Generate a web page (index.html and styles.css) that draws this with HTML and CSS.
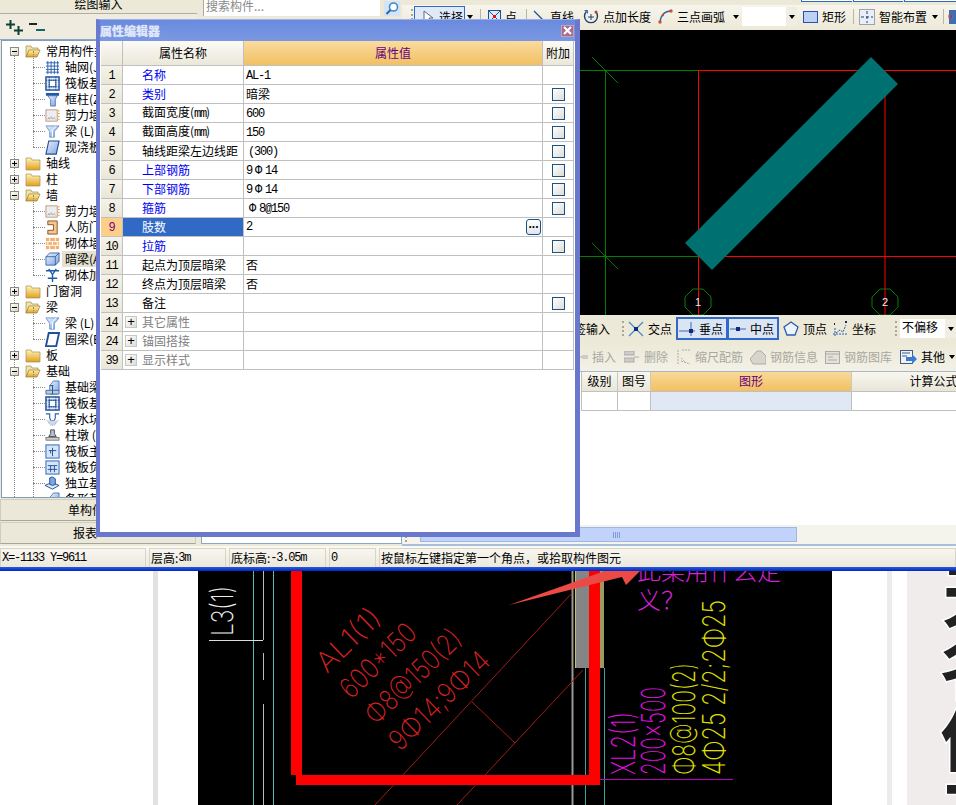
FILE: index.html
```html
<!DOCTYPE html>
<html lang="zh">
<head>
<meta charset="utf-8">
<title>属性编辑器</title>
<link rel="stylesheet" href="styles.css">
</head>
<body>
<svg class="defs" width="0" height="0">
  <defs>
    <linearGradient id="gf" x1="0" y1="0" x2="0" y2="1"><stop offset="0" stop-color="#fff3b8"/><stop offset="1" stop-color="#e0a020"/></linearGradient>
    <linearGradient id="gb" x1="0" y1="0" x2="1" y2="1"><stop offset="0" stop-color="#e8f0fc"/><stop offset="1" stop-color="#7fa6e0"/></linearGradient>
    <symbol id="f-open" viewBox="0 0 16 16"><path d="M1 3h5l1 2h6v3H4L1 14z" fill="#f3e3a0" stroke="#a08a50" stroke-width=".7"/><path d="M4 7h11l-3 7H1z" fill="url(#gf)" stroke="#9a7d30" stroke-width=".7"/></symbol>
    <symbol id="f-closed" viewBox="0 0 16 16"><path d="M1 3h5l1 2h8v10H1z" fill="url(#gf)" stroke="#a89050" stroke-width=".7"/></symbol>
    <symbol id="i-grid" viewBox="0 0 16 16"><path d="M3 1v14M6.500 1v14M10 1v14M13.500 1v14M1 3h14M1 6.500h14M1 10h14M1 13h14" stroke="#2a5faf" fill="none" stroke-width="1"/></symbol>
    <symbol id="i-raft" viewBox="0 0 16 16"><rect x="1" y="1" width="14" height="14" fill="#dfe9f8" stroke="#1f4f98" stroke-width="1.500"/><rect x="4.500" y="4.500" width="7" height="7" fill="#fff" stroke="#1f4f98"/><path d="M1 4.500h14M1 11.500h14M4.500 1v14M11.500 1v14" stroke="#1f4f98" stroke-dasharray="1.500 1" fill="none"/></symbol>
    <symbol id="i-col" viewBox="0 0 16 16"><path d="M1 1h14v3H1z" fill="#1f5aa8"/><path d="M3 4h10l-2 4v7H6V8z" fill="url(#gb)" stroke="#1f4f98" stroke-width=".7"/></symbol>
    <symbol id="i-wall" viewBox="0 0 16 16"><rect x="1" y="2" width="12" height="12" fill="#eee" stroke="#b08060" stroke-width=".8"/><path d="M3 12l1-2 1 2 2-3 1 3 2-2 1 2" stroke="#888" fill="none" stroke-dasharray="1 .7"/><path d="M14 3h1.500M14 6h1.500M14 9h1.500M14 12h1.500" stroke="#e08020"/></symbol>
    <symbol id="i-beam" viewBox="0 0 16 16"><path d="M1 2h14L10 8v6H5V8z" fill="url(#gb)" stroke="#3c78b8" stroke-width=".7"/><path d="M6 8l6-6M8 14V7" stroke="#fff"/></symbol>
    <symbol id="i-slab" viewBox="0 0 16 16"><path d="M4 1h11l-3 14H1z" fill="url(#gb)" stroke="#1f4f98" stroke-width="1.200"/></symbol>
    <symbol id="i-door" viewBox="0 0 16 16"><path d="M3 1h10v14H3v-4h6V5H3z" fill="#f3c890" stroke="#8a5020"/></symbol>
    <symbol id="i-brick" viewBox="0 0 16 16"><rect x="1" y="2" width="14" height="12" fill="#f4b070"/><path d="M1 6h14M1 10h14M5 2v4M11 2v4M3 6v4M8 6v4M13 6v4M5 10v4M11 10v4" stroke="#fff" fill="none"/></symbol>
    <symbol id="i-box" viewBox="0 0 16 16"><path d="M1 5l4-4h10v9l-4 4H1z" fill="url(#gb)" stroke="#1f4f98" stroke-width=".8"/><path d="M1 5h10v9M11 5l4-4" stroke="#1f4f98" fill="none" stroke-width=".8"/></symbol>
    <symbol id="i-wadd" viewBox="0 0 16 16"><path d="M1 3h14M4 1l4 6 4-6M8 7v8M3 11h10" stroke="#1f5aa8" fill="none" stroke-width="1.500"/></symbol>
    <symbol id="i-ring" viewBox="0 0 16 16"><path d="M4 1h11l-3 14H1z" fill="#fff" stroke="#1f4f98" stroke-width="2"/></symbol>
    <symbol id="i-fbeam" viewBox="0 0 16 16"><path d="M5 15V6l4-5h6v10l-2 4z" fill="url(#gb)" stroke="#1f4f98" stroke-width=".7"/><path d="M1 15v-4h14v4z" fill="#bcd" stroke="#1f4f98" stroke-width=".8"/><path d="M8 6v9M5 6h4" stroke="#1f4f98"/></symbol>
    <symbol id="i-pit" viewBox="0 0 16 16"><path d="M1 2h4v4l1 3h4l1-3V2h4" fill="none" stroke="#2a5faf" stroke-width="1.200"/><path d="M2 9l4 5h4l4-5" fill="#cfd8e6" stroke="#8aa" stroke-dasharray="1 1"/></symbol>
    <symbol id="i-pier" viewBox="0 0 16 16"><path d="M6 6V2h4v4l2 3H4z" fill="#b8c4d4" stroke="#445"/><rect x="1" y="10" width="14" height="3" fill="#ccc" stroke="#666" stroke-width=".8"/></symbol>
    <symbol id="i-c1" viewBox="0 0 16 16"><rect x="1" y="1" width="14" height="14" fill="#d6e6fa" stroke="#2a5faf"/><path d="M4 7h8M8 4v9M6 7v3" stroke="#1f4f98" fill="none"/></symbol>
    <symbol id="i-c2" viewBox="0 0 16 16"><rect x="1" y="1" width="14" height="14" fill="#d6e6fa" stroke="#2a5faf"/><path d="M3 6h10M3 10h10M6 6v7M10 6v7" stroke="#1f4f98" fill="none"/></symbol>
    <symbol id="i-iso" viewBox="0 0 16 16"><path d="M0 10l7-3 8 3-7 4z" fill="#dfe9f8" stroke="#1f4f98"/><path d="M5 9V2l3-1 3 2v6l-3 1z" fill="#7fa6e0" stroke="#1f4f98"/></symbol>
  </defs>
</svg>

<div class="app">
  <div class="work">
    <aside class="left">
      <div class="top-tab"><span>绘图输入</span></div>
      <div class="mini-tb">
        <svg width="40" height="16" viewBox="0 0 40 16" aria-hidden="true"><path d="M0 4.500h9M4.500 0v9M8 10.500h9M12.500 6v9" stroke="#0f3f3a" stroke-width="2" fill="none"/><path d="M23 4h8" stroke="#222" stroke-width="2"/><path d="M30 10h9" stroke="#0f6a60" stroke-width="2"/></svg>
      </div>
      <div class="tree">
        <div class="tree-in">
          <div class="node"><span class="exp minus"></span><svg class="fd"><use href="#f-open"/></svg><span class="lb">常用构件类型</span></div>
          <div class="kids">
            <div class="leaf"><svg class="ic"><use href="#i-grid"/></svg><span class="lb">轴网(J)</span></div>
            <div class="leaf"><svg class="ic"><use href="#i-raft"/></svg><span class="lb">筏板基础(M)</span></div>
            <div class="leaf"><svg class="ic"><use href="#i-col"/></svg><span class="lb">框柱(Z)</span></div>
            <div class="leaf"><svg class="ic"><use href="#i-wall"/></svg><span class="lb">剪力墙(Q)</span></div>
            <div class="leaf"><svg class="ic"><use href="#i-beam"/></svg><span class="lb">梁 (L)</span></div>
            <div class="leaf"><svg class="ic"><use href="#i-slab"/></svg><span class="lb">现浇板(B)</span></div>
          </div>
          <div class="node"><span class="exp plus"></span><svg class="fd"><use href="#f-closed"/></svg><span class="lb">轴线</span></div>
          <div class="node"><span class="exp plus"></span><svg class="fd"><use href="#f-closed"/></svg><span class="lb">柱</span></div>
          <div class="node"><span class="exp minus"></span><svg class="fd"><use href="#f-open"/></svg><span class="lb">墙</span></div>
          <div class="kids">
            <div class="leaf"><svg class="ic"><use href="#i-wall"/></svg><span class="lb">剪力墙(Q)</span></div>
            <div class="leaf"><svg class="ic"><use href="#i-door"/></svg><span class="lb">人防门框墙</span></div>
            <div class="leaf"><svg class="ic"><use href="#i-brick"/></svg><span class="lb">砌体墙(Q)</span></div>
            <div class="leaf"><svg class="ic"><use href="#i-box"/></svg><span class="lb sel">暗梁(A)</span></div>
            <div class="leaf"><svg class="ic"><use href="#i-wadd"/></svg><span class="lb">砌体加筋</span></div>
          </div>
          <div class="node"><span class="exp plus"></span><svg class="fd"><use href="#f-closed"/></svg><span class="lb">门窗洞</span></div>
          <div class="node"><span class="exp minus"></span><svg class="fd"><use href="#f-open"/></svg><span class="lb">梁</span></div>
          <div class="kids">
            <div class="leaf"><svg class="ic"><use href="#i-beam"/></svg><span class="lb">梁 (L)</span></div>
            <div class="leaf"><svg class="ic"><use href="#i-ring"/></svg><span class="lb">圈梁(E)</span></div>
          </div>
          <div class="node"><span class="exp plus"></span><svg class="fd"><use href="#f-closed"/></svg><span class="lb">板</span></div>
          <div class="node"><span class="exp minus"></span><svg class="fd"><use href="#f-open"/></svg><span class="lb">基础</span></div>
          <div class="kids">
            <div class="leaf"><svg class="ic"><use href="#i-fbeam"/></svg><span class="lb">基础梁(F)</span></div>
            <div class="leaf"><svg class="ic"><use href="#i-raft"/></svg><span class="lb">筏板基础</span></div>
            <div class="leaf"><svg class="ic"><use href="#i-pit"/></svg><span class="lb">集水坑(K)</span></div>
            <div class="leaf"><svg class="ic"><use href="#i-pier"/></svg><span class="lb">柱墩 (Y)</span></div>
            <div class="leaf"><svg class="ic"><use href="#i-c1"/></svg><span class="lb">筏板主筋</span></div>
            <div class="leaf"><svg class="ic"><use href="#i-c2"/></svg><span class="lb">筏板负筋</span></div>
            <div class="leaf"><svg class="ic"><use href="#i-iso"/></svg><span class="lb">独立基础</span></div>
            <div class="leaf"><svg class="ic"><use href="#i-fbeam"/></svg><span class="lb">条形基础</span></div>
          </div>
        </div>
      </div>
      <button class="side-btn">单构件输入</button>
      <button class="side-btn last">报表</button>
    </aside>

    <div class="mid">
      <div class="search-row">
        <div class="search">搜索构件...</div>
        <svg class="mag" width="16" height="16" viewBox="0 0 16 16" aria-hidden="true"><rect x="0" y="0" width="16" height="15" fill="#d5e4f5"/><circle cx="9.500" cy="6" r="4" fill="#fff" stroke="#3c8ac8" stroke-width="1.600"/><path d="M6.500 9L2.500 13" stroke="#2a6aa8" stroke-width="2.200"/></svg>
      </div>
      <div class="listbox"></div>
    </div>

    <div class="right">
      <div class="strip"><span class="tabmark"></span><span class="tabmark"></span><span class="tabmark"></span></div>
      <div class="tb">
        <span class="grip"></span>
        <span class="t-btn"><svg width="14" height="14" viewBox="0 0 14 14"><path d="M3 1v11l3-3 2 4 2-1-2-4h4z" fill="#fff" stroke="#667"/></svg>选择</span>
        <span class="caret"></span>
        <span class="vsep"></span>
        <span class="ti"><svg width="13" height="13" viewBox="0 0 13 13"><rect x=".5" y=".5" width="12" height="12" fill="#dfe8f8" stroke="#1f4f98"/><path d="M1 1l11 11M12 1L1 12" stroke="#1f4f98"/><rect x="5" y="5" width="3" height="3" fill="#e01010"/></svg>点</span>
        <span class="vsep"></span>
        <span class="ti"><svg width="13" height="13" viewBox="0 0 13 13"><path d="M1 1l11 11" stroke="#1f4f98" stroke-width="1.200"/></svg>直线</span>
        <span class="ti"><svg width="16" height="16" viewBox="0 0 16 16"><path d="M3 3a6.500 6.500 0 1 0 10 0" stroke="#1f3f70" stroke-width="1.400" fill="none"/><path d="M5 8h6M8 5v6" stroke="#1f3f70"/><path d="M1 1h4v4z" fill="#3f6fb0"/><circle cx="13" cy="3" r="1.500" fill="#c04030"/></svg>点加长度</span>
        <span class="ti"><svg width="15" height="15" viewBox="0 0 15 15"><path d="M2 13C3 6 7 2 13 2" stroke="#2a6aa8" stroke-width="1.500" fill="none"/><circle cx="2" cy="13" r="1.700" fill="#d05030"/><circle cx="13" cy="2" r="1.700" fill="#d05030"/><circle cx="5" cy="6" r="1.200" fill="#d05030"/></svg>三点画弧</span>
        <span class="caret"></span>
        <span class="combo"><span class="c-arrow"><span class="caret"></span></span></span>
        <span class="ti"><svg width="15" height="12" viewBox="0 0 15 12"><rect x=".5" y=".5" width="14" height="11" fill="#bcd2f5" stroke="#2a4fb0"/></svg>矩形</span>
        <span class="vsep"></span>
        <span class="ti"><svg width="16" height="16" viewBox="0 0 16 16"><rect x=".5" y=".5" width="15" height="15" fill="#e8eff8" stroke="#556" stroke-dasharray="1 1"/><path d="M8 2v12M2 8h12" stroke="#1f3f70" stroke-dasharray="3 2"/></svg>智能布置</span>
        <span class="caret"></span>
        <span class="vsep"></span>
        <svg width="10" height="16" viewBox="0 0 10 16"><rect x="1" y="1" width="9" height="14" fill="#3f6fb0"/><text x="0" y="10" class="tiny-red">0</text></svg>
      </div>

      <svg class="canvas" viewBox="402 30 554 285" aria-hidden="true">
        <rect x="402" y="30" width="554" height="285" fill="#000"/>
        <g stroke="#008000" fill="none">
          <path d="M500 70.500H698M500 256.500H698M605.500 70V315"/>
          <path d="M592 57l26 26M592 243l26 26"/>
          <polygon points="693,289 703,289 711,297 711,307 703,315 693,315 685,307 685,297"/>
          <polygon points="880,289 890,289 898,297 898,307 890,315 880,315 872,307 872,297"/>
        </g>
        <g stroke="#f00" fill="none">
          <path d="M698 70.500H956M698 256.500H956M698.500 70V315M885 70V315"/>
        </g>
        <polygon points="871,57 898,84 712,270 685,243" fill="#007070"/>
        <text x="698" y="306" class="axis">1</text>
        <text x="885" y="306" class="axis">2</text>
      </svg>

      <div class="snapbar">
        <span class="sn-t">标签输入</span>
        <span class="grip"></span>
        <span class="ti"><svg width="16" height="16" viewBox="0 0 16 16"><path d="M1 1l14 14M15 1L1 15" stroke="#3c8ac8" stroke-width="1.200"/><rect x="6" y="6" width="4" height="4" fill="#102a80"/></svg>交点</span>
        <span class="sn-on"><svg width="16" height="14" viewBox="0 0 16 14"><path d="M0 9h16" stroke="#3c6aa8"/><path d="M12 0v14" stroke="#3c6aa8"/><rect x="10" y="7" width="4" height="4" fill="#102a80"/></svg>垂点</span>
        <span class="sn-on"><svg width="16" height="14" viewBox="0 0 16 14"><path d="M0 7h16" stroke="#3c6aa8"/><rect x="6" y="5" width="4" height="4" fill="#102a80"/></svg>中点</span>
        <span class="ti vt"><svg width="16" height="16" viewBox="0 0 16 16"><path d="M8 1l7 5-3 8H4L1 6z" fill="#eef4fb" stroke="#2a5faf" stroke-width="1.300"/></svg>顶点</span>
        <span class="ti"><svg width="16" height="16" viewBox="0 0 16 16"><path d="M3 15V6M1 13h15M4 12l4-3 3 2 3-7" stroke="#2a5faf" stroke-dasharray="2 1" fill="none"/><path d="M2 3h1M13 1h2" stroke="#224" stroke-width="2"/></svg>坐标</span>
        <span class="grip"></span>
        <span class="combo off"><span class="c-txt">不偏移</span><span class="c-arrow"><span class="caret"></span></span></span>
      </div>

      <div class="rebarbar">
        <span class="ti dim"><svg width="10" height="10" viewBox="0 0 10 10"><path d="M0 5h4" stroke="#aaa"/><rect x="4" y="3" width="6" height="4" fill="#ccc"/></svg>插入</span>
        <span class="ti dim"><svg width="16" height="12" viewBox="0 0 16 12"><rect x="0" y="0" width="10" height="4" fill="#ccc" stroke="#aaa"/><rect x="0" y="7" width="10" height="4" fill="#ccc" stroke="#aaa"/><path d="M10 6h5" stroke="#aaa"/></svg>删除</span>
        <span class="ti dim"><svg width="14" height="16" viewBox="0 0 14 16"><path d="M1 1v14M5 1h8M4 12l9 3M4 9l5 5" stroke="#aaa" stroke-dasharray="2 1" fill="none"/></svg>缩尺配筋</span>
        <span class="ti dim"><svg width="16" height="15" viewBox="0 0 16 15"><path d="M0 9l7-8h4l5 5v8H3z" fill="#d8d6cc" stroke="#aaa"/></svg>钢筋信息</span>
        <span class="ti dim"><svg width="15" height="13" viewBox="0 0 15 13"><rect x=".5" y=".5" width="14" height="12" fill="#e4e2d8" stroke="#aaa"/><path d="M1 3h13M3 6h5M3 9h9" stroke="#aaa"/></svg>钢筋图库</span>
        <span class="ti"><svg width="17" height="15" viewBox="0 0 17 15"><rect x=".5" y=".5" width="12" height="13" fill="#eef3fb" stroke="#3f5a80"/><path d="M2 3h8M2 6h5" stroke="#3f5a80"/><path d="M6 7h6V4l5 5-5 5v-3H6z" fill="#3a7ad0"/></svg>其他<span class="caret"></span></span>
      </div>

      <div class="rgrid head">
        <div class="rg-c">级别</div><div class="rg-c">图号</div><div class="rg-c hot">图形</div><div class="rg-c">计算公式</div>
      </div>
      <div class="rgrid row">
        <div class="rg-d"></div><div class="rg-d"></div><div class="rg-d cur"></div><div class="rg-d"></div>
      </div>
      <div class="rfill"></div>
      <div class="scroller">
        <span class="grip"></span>
        <span class="thumb"><span class="thumb-grip"></span></span>
      </div>
    </div>
  </div>

  <div class="status">
    <span class="st s1"><span class="mono">X=-1133 Y=9611</span></span>
    <span class="st s2">层高:<span class="mono">3m</span></span>
    <span class="st s3">底标高:<span class="mono">-3.05m</span></span>
    <span class="st s4"><span class="mono">0</span></span>
    <span class="st s5">按鼠标左键指定第一个角点，或拾取构件图元</span>
  </div>
  <div class="bluebar"></div>

  <section class="dialog">
    <header class="d-title"><span>属性编辑器</span><span class="close"><svg width="9" height="9" viewBox="0 0 9 9"><path d="M1 1l7 7M8 1L1 8" stroke="#fff" stroke-width="2.200"/></svg></span></header>
    <div class="d-body">
      <table class="pt">
        <colgroup><col class="c0"><col class="c1"><col class="c2"><col class="c3"></colgroup>
        <thead>
          <tr><th class="th"></th><th class="th">属性名称</th><th class="th hot">属性值</th><th class="th">附加</th></tr>
        </thead>
        <tbody>
          <tr><td class="n"><span class="mono">1</span></td><td class="k blue">名称</td><td class="v"><span class="mono">AL-1</span></td><td class="x"></td></tr>
          <tr><td class="n"><span class="mono">2</span></td><td class="k blue">类别</td><td class="v">暗梁</td><td class="x"><span class="cb"></span></td></tr>
          <tr><td class="n"><span class="mono">3</span></td><td class="k">截面宽度(<span class="mono">mm</span>)</td><td class="v"><span class="mono">600</span></td><td class="x"><span class="cb"></span></td></tr>
          <tr><td class="n"><span class="mono">4</span></td><td class="k">截面高度(<span class="mono">mm</span>)</td><td class="v"><span class="mono">150</span></td><td class="x"><span class="cb"></span></td></tr>
          <tr><td class="n"><span class="mono">5</span></td><td class="k">轴线距梁左边线距</td><td class="v ind"><span class="mono">(300)</span></td><td class="x"><span class="cb"></span></td></tr>
          <tr><td class="n"><span class="mono">6</span></td><td class="k blue">上部钢筋</td><td class="v"><span class="mono">9<span class="phi">Φ</span>14</span></td><td class="x"><span class="cb"></span></td></tr>
          <tr><td class="n"><span class="mono">7</span></td><td class="k blue">下部钢筋</td><td class="v"><span class="mono">9<span class="phi">Φ</span>14</span></td><td class="x"><span class="cb"></span></td></tr>
          <tr><td class="n"><span class="mono">8</span></td><td class="k blue">箍筋</td><td class="v"><span class="mono"><span class="phi">Φ</span>8@150</span></td><td class="x"><span class="cb"></span></td></tr>
          <tr class="cur"><td class="n"><span class="mono">9</span></td><td class="k">肢数</td><td class="v"><div class="v-flex"><span class="mono">2</span><span class="more">...</span></div></td><td class="x"></td></tr>
          <tr><td class="n"><span class="mono">10</span></td><td class="k blue">拉筋</td><td class="v"></td><td class="x"><span class="cb"></span></td></tr>
          <tr><td class="n"><span class="mono">11</span></td><td class="k">起点为顶层暗梁</td><td class="v">否</td><td class="x"></td></tr>
          <tr><td class="n"><span class="mono">12</span></td><td class="k">终点为顶层暗梁</td><td class="v">否</td><td class="x"></td></tr>
          <tr><td class="n"><span class="mono">13</span></td><td class="k">备注</td><td class="v"></td><td class="x"><span class="cb"></span></td></tr>
          <tr class="grp"><td class="n"><span class="mono">14</span></td><td class="k"><span class="pl">+</span>其它属性</td><td class="v"></td><td class="x"></td></tr>
          <tr class="grp"><td class="n"><span class="mono">24</span></td><td class="k"><span class="pl">+</span>锚固搭接</td><td class="v"></td><td class="x"></td></tr>
          <tr class="grp"><td class="n"><span class="mono">39</span></td><td class="k"><span class="pl">+</span>显示样式</td><td class="v"></td><td class="x"></td></tr>
        </tbody>
      </table>
    </div>
  </section>
</div>

<svg class="photo" viewBox="0 571 956 234" aria-label="CAD 图纸截图">
  <rect x="0" y="571" width="956" height="234" fill="#fff"/>
  <rect x="153" y="571" width="5" height="234" fill="#e2e2e2"/>
  <rect x="887" y="571" width="5" height="234" fill="#ececec"/>
  <rect x="907" y="571" width="49" height="234" fill="#efeceb"/>
  <g class="big">
    <text x="942" y="622">天</text>
    <text x="940" y="694">名</text>
    <text x="940" y="766">住</text>
    <text x="940" y="838">工</text>
  </g>
  <rect x="198" y="571" width="634" height="234" fill="#000"/>

  <path d="M253.500 571V805M273.500 571V805" stroke="#5fb8b8" fill="none"/>
  <path d="M263.500 571V640M263.500 653V680M263.500 704V805" stroke="#bbb" fill="none"/>
  <path d="M209 640.500H263" stroke="#ddd" fill="none"/>
  <text class="cad white" transform="translate(233 636) rotate(-90)" textLength="50" lengthAdjust="spacingAndGlyphs">L3(1)</text>

  <path d="M572.500 571V805" stroke="#999" stroke-width="2" fill="none"/>
  <rect x="575" y="571" width="14" height="97" fill="#858585"/>
  <path d="M575.500 571V668" stroke="#c4c45a" fill="none"/>
  <path d="M585.500 668V805M604.500 668V805" stroke="#3aa0a0" fill="none"/>
  <rect x="600" y="571" width="4" height="97" fill="#9a9a60"/>

  <path d="M572 593L375 805M583 670L457 805M472 702L515 743" stroke="#a01c1c" fill="none"/>

  <path d="M291 571V775H296V785H600V571H589V775H302V571z" fill="#f00"/>

  <g class="cad red">
    <text transform="translate(327 674) rotate(-44)" textLength="78" lengthAdjust="spacingAndGlyphs">AL1(1)</text>
    <text transform="translate(351 700) rotate(-44)" textLength="94" lengthAdjust="spacingAndGlyphs">600*150</text>
    <text transform="translate(376 726) rotate(-44)" textLength="122" lengthAdjust="spacingAndGlyphs">Φ8@150(2)</text>
    <text transform="translate(400 752) rotate(-44)" textLength="128" lengthAdjust="spacingAndGlyphs">9Φ14;9Φ14</text>
  </g>

  <path d="M509 605L605 571H640L626 585L622 577z" fill="#ec4a44"/>

  <text class="zh-mag" x="637" y="580">此梁用什么定</text>
  <text class="zh-mag" x="637" y="609">义？</text>

  <g class="cad mag-t">
    <text transform="translate(635 775) rotate(-90)" textLength="63" lengthAdjust="spacingAndGlyphs">XL2(1)</text>
    <text transform="translate(665 775) rotate(-90)" textLength="88" lengthAdjust="spacingAndGlyphs">200x500</text>
  </g>
  <g class="cad yel">
    <text transform="translate(695 775) rotate(-90)" textLength="112" lengthAdjust="spacingAndGlyphs">Φ8@100(2)</text>
    <text transform="translate(725 775) rotate(-90)" textLength="175" lengthAdjust="spacingAndGlyphs">4Φ25 2/2;2Φ25</text>
  </g>
  <path d="M600 779.500H733" stroke="#c000c0" fill="none"/>
</svg>
</body>
</html>
```

FILE: styles.css
```css
* { box-sizing: border-box; }
html, body { margin: 0; padding: 0; }
body {
  width: 956px;
  height: 805px;
  overflow: hidden;
  background: #fff;
  font: 12px/1 "Noto Sans CJK SC", "Liberation Sans", sans-serif;
  color: #000;
}
svg { display: block; flex: none; }
.defs { position: absolute; }

.mono { font-family: "Liberation Mono", "Noto Sans CJK SC", monospace; font-size: 12px; letter-spacing: -1.2px; }
.phi { display: inline-block; width: 13px; text-align: center; letter-spacing: 0; }

.app { position: relative; height: 571px; overflow: hidden; background: #ece9d8; }
.work { display: flex; height: 546px; }

/* left panel */
.left { width: 197px; display: flex; flex-direction: column; background: #ece9d8; }
.top-tab { height: 14px; overflow: hidden; text-align: center; border-bottom: 1px solid #b0aea2; }
.top-tab span { display: block; margin-top: -3px; line-height: 13px; }
.mini-tb { height: 26px; padding: 6px 0 0 6px; border-bottom: 1px solid #8ca6c4; background: #efecdf; }
.tree { height: 458px; margin: 0 2px 0 1px; overflow: hidden; background: #fff; border: 1px solid #7f9db9; }
.tree-in { position: relative; padding-top: 2px; }
.tree-in::before {
  content: ""; position: absolute; left: 12px; top: 8px; bottom: 0;
  border-left: 1px dotted #888;
}
.node, .leaf { position: relative; display: flex; align-items: center; height: 16px; white-space: nowrap; }
.node { padding-left: 8px; }
.exp {
  position: relative; z-index: 1; width: 9px; height: 9px; flex: none;
  background: linear-gradient(135deg, #fff, #d8d4c4);
  border: 1px solid #8a8a80;
}
.exp::before { content: ""; position: absolute; left: 1px; right: 1px; top: 3px; height: 1px; background: #000; }
.exp.plus::after { content: ""; position: absolute; top: 1px; bottom: 1px; left: 3px; width: 1px; background: #000; }
.fd { width: 16px; height: 16px; margin-left: 6px; }
.node .lb { margin-left: 5px; }
.kids { position: relative; }
.kids::before {
  content: ""; position: absolute; left: 31px; top: -8px; bottom: 8px;
  border-left: 1px dotted #888;
}
.leaf { padding-left: 43px; }
.leaf::before {
  content: ""; position: absolute; left: 31px; width: 12px; top: 8px;
  border-top: 1px dotted #888;
}
.ic { width: 15px; height: 15px; }
.leaf .lb { margin-left: 5px; }
.lb.sel { background: #e4e1d0; padding: 2px 3px; margin-left: 2px; }
.side-btn {
  height: 22px; margin: 1px 1px 0 0; padding: 0;
  font: inherit; color: #000; text-align: center;
  background: #ebe8d9; border: 1px solid #d0cdbd; border-bottom-color: #a8a698;
}
.side-btn.last { padding-right: 26px; }

/* middle */
.mid { width: 205px; display: flex; flex-direction: column; padding: 0 0 2px 4px; background: #ece9d8; }
.search-row { display: flex; height: 16px; align-items: flex-start; }
.search { width: 177px; height: 16px; margin-left: 2px; padding: 0 0 0 2px; background: #fff; color: #8a8a8a; line-height: 12px; border-left: 1px solid #aaa; }
.mag { margin-left: 4px; margin-top: 1px; }
.listbox { flex: 1; margin-top: 4px; background: #fff; border: 1px solid #8ca6c4; }

/* right */
.right { width: 554px; display: flex; flex-direction: column; background: #ece9d8; }
.strip { height: 5px; display: flex; justify-content: flex-end; align-items: flex-start; gap: 1px; }
.tabmark { width: 50px; height: 2px; background: #fff; border-bottom: 1px solid #3169c6; border-left: 1px solid #3169c6; }
.tabmark:first-child { width: 51px; }
.tabmark:last-child { width: 52px; }
.tb {
  height: 25px; padding: 0 0 2px 9px; overflow: hidden;
  display: grid; align-items: center;
  grid-template-columns: 3px 53px 13px 8px 38px 7px 50px 75px 75px 9px 61px 50px 6px 73px 11px 5px 8px;
  background: linear-gradient(#f7f5ec, #ece9d8);
}
.ti, .t-btn, .sn-on { display: flex; align-items: center; gap: 4px; white-space: nowrap; }
.t-btn { height: 21px; width: 51px; padding-left: 6px; background: #dfe9f8; border: 1px solid #3169c6; align-self: start; margin-top: 1px; }
.grip { width: 3px; height: 15px; border-left: 2px dotted #a8a698; }
.caret { width: 0; height: 0; border: 3px solid transparent; border-top: 4px solid #000; border-bottom: 0; }
.vsep { width: 1px; height: 15px; background: #b8b6a8; justify-self: start; }
.combo { display: flex; width: 55px; height: 19px; background: #fff; }
.combo .c-txt { flex: 1; line-height: 15px; padding-left: 2px; }
.c-arrow { width: 11px; margin-left: auto; display: flex; align-items: center; justify-content: center; background: #f0eee2; }
.tiny-red { font: 8px "Liberation Sans", sans-serif; fill: #d03020; }

.canvas { width: 554px; height: 285px; }
.axis { font: 11px "Liberation Sans", sans-serif; fill: #eee; text-anchor: middle; }

.snapbar {
  height: 27px; padding-left: 160px; overflow: hidden;
  display: grid; align-items: center;
  grid-template-columns: 60px 6px 48px 51px 51px 54px 63px 5px 56px;
  background: #ece9d8;
}
.sn-t { white-space: nowrap; }
.sn-on { height: 23px; padding-left: 1px; background: #d9e5f5; border: 2px solid #3169c6; margin-right: -1px; }
.vt { margin-left: 5px; }
.combo.off { width: 56px; }

.rebarbar {
  height: 30px; padding: 3px 0 2px 176px; overflow: hidden;
  display: grid; align-items: center;
  grid-template-columns: 46px 53px 73px 75px 75px 56px;
  background: linear-gradient(#ece9d8, #f3f1e6);
  border-bottom: 1px solid #a9b5c8;
}
.dim { color: #a8a8a0; }
.rgrid { display: grid; grid-template-columns: 37px 33px 201px 164px; padding-left: 179px; overflow: hidden; width: 554px; background: #fff; }
.rg-c { height: 20px; line-height: 18px; text-align: center; white-space: nowrap; background: linear-gradient(#f8f7f0, #e9e6d8); border-right: 1px solid #c8c8c8; border-bottom: 1px solid #c0c0c0; }
.rg-c.hot { background: linear-gradient(#f9d998, #f2c060); color: #660080; }
.rg-d { height: 19px; border-right: 1px solid #c0c0c0; border-bottom: 1px solid #c0c0c0; }
.rg-d.cur { background: #dfe8f4; }
.rg-c:first-child, .rg-d:first-child { border-left: 1px solid #c0c0c0; }
.rfill { height: 114px; background: #fff; }
.scroller { flex: 1; display: flex; align-items: center; padding-left: 3px; background: #f5f4ec; border-bottom: 2px solid #a9bedb; }
.thumb { display: flex; align-items: center; justify-content: flex-end; margin-left: 12px; width: 377px; height: 15px; padding-right: 175px; background: #c1d3fb; border: 1px solid #9cb6e6; }
.thumb-grip { width: 8px; height: 6px; background: repeating-linear-gradient(90deg, #7f9ad8 0 1px, transparent 1px 2px); }

/* status bar */
.status { display: flex; height: 21px; padding-top: 2px; gap: 3px; background: linear-gradient(#faf9f3, #ebe8dc); }
.st { display: flex; align-items: center; height: 19px; padding-left: 1px; white-space: nowrap; border: 1px solid #d8d5c8; border-bottom: 0; }
.st.s1 { width: 146px; }
.st.s2 { width: 77px; }
.st.s3 { width: 97px; }
.st.s4 { width: 47px; }
.st.s5 { flex: 1; }
.bluebar { height: 4px; background: linear-gradient(#2a5ae0, #0028c0); }

/* dialog */
.dialog {
  position: absolute; left: 96px; top: 19px; width: 484px; height: 518px;
  display: flex; flex-direction: column;
  background: #6c7fd0;
  border-style: solid;
  border-width: 1px 5px 5px 4px;
  border-color: #9cb0ea #6a78cc #6a78cc #6a78d0;
}
.d-title {
  flex: none; height: 21px;
  display: flex; align-items: center; justify-content: space-between;
  padding-right: 1px;
  background: linear-gradient(#6a8ade, #7a98e2);
  color: #dfe6f8; font-weight: 700;
}
.d-title span:first-child { text-shadow: 0 0 1px #e8eefc; }
.close { display: flex; align-items: center; justify-content: center; width: 13px; height: 12px; background: #a46c8c; border: 1px solid #c8a0b8; }
.d-body { flex: 1; background: #fff; border-left: 1px solid #fff; overflow: hidden; }
.pt { width: 473px; table-layout: fixed; border-collapse: separate; border-spacing: 0; }
.c0 { width: 22px; } .c1 { width: 121px; } .c2 { width: 299px; } .c3 { width: 31px; }
.pt th, .pt td { padding: 0; border-right: 1px solid #c0c0c0; border-bottom: 1px solid #c0c0c0; font-weight: 400; white-space: nowrap; overflow: hidden; }
.pt th { height: 25px; background: linear-gradient(#fbfaf5, #ebe8da); }
.pt th.hot { background: linear-gradient(#fadb9e, #f1c062); color: #660080; }
.pt td { height: 19px; }
.pt .n { text-align: center; background: linear-gradient(#f5f3ea, #e9e6d8); }
.pt .k { padding-left: 19px; }
.blue { color: #0000f0; }
.pt .v { padding-left: 2px; }
.pt .ind { padding-left: 4px; }
.x { text-align: center; }
.cb { display: inline-block; width: 13px; height: 13px; vertical-align: middle; background: linear-gradient(135deg, #fff, #dcdcd8); border: 1px solid #1c5180; }
.pt .cur .n { background: #fdd08a; color: #800080; }
.pt .cur .k { background: #316ac5; color: #fff; }
.v-flex { display: flex; justify-content: space-between; align-items: center; padding-right: 1px; }
.more { width: 15px; height: 16px; line-height: 9px; text-align: center; font-weight: 700; background: linear-gradient(#fff, #dfe6ee); border: 1px solid #1c5180; border-radius: 3px; font-family: "Liberation Sans", sans-serif; }
.grp .k { position: relative; color: #808080; }
.pl { position: absolute; left: 2px; top: 3px; width: 12px; height: 12px; line-height: 10px; text-align: center; color: #000; background: linear-gradient(135deg, #fff, #dcdcd8); border: 1px solid #c8c8c0; font-family: "Liberation Sans", sans-serif; font-size: 13px; }

/* lower picture */
.photo { width: 956px; height: 234px; }
.cad { font-family: Inter, "Liberation Sans", sans-serif; font-weight: 200; font-size: 28px; }
.red { fill: #d82020; }
.white { fill: #eee; font-size: 30px; }
.mag-t { fill: #e010e0; font-size: 33px; }
.yel { fill: #e0e000; font-size: 31px; }
.zh-mag { font-family: "Noto Sans CJK SC", sans-serif; font-weight: 300; font-size: 24px; fill: #d820d8; }
.big { font-family: "Noto Sans CJK SC", sans-serif; font-weight: 700; font-size: 70px; fill: #222; stroke: #fff; stroke-width: 3px; paint-order: stroke; }
```
